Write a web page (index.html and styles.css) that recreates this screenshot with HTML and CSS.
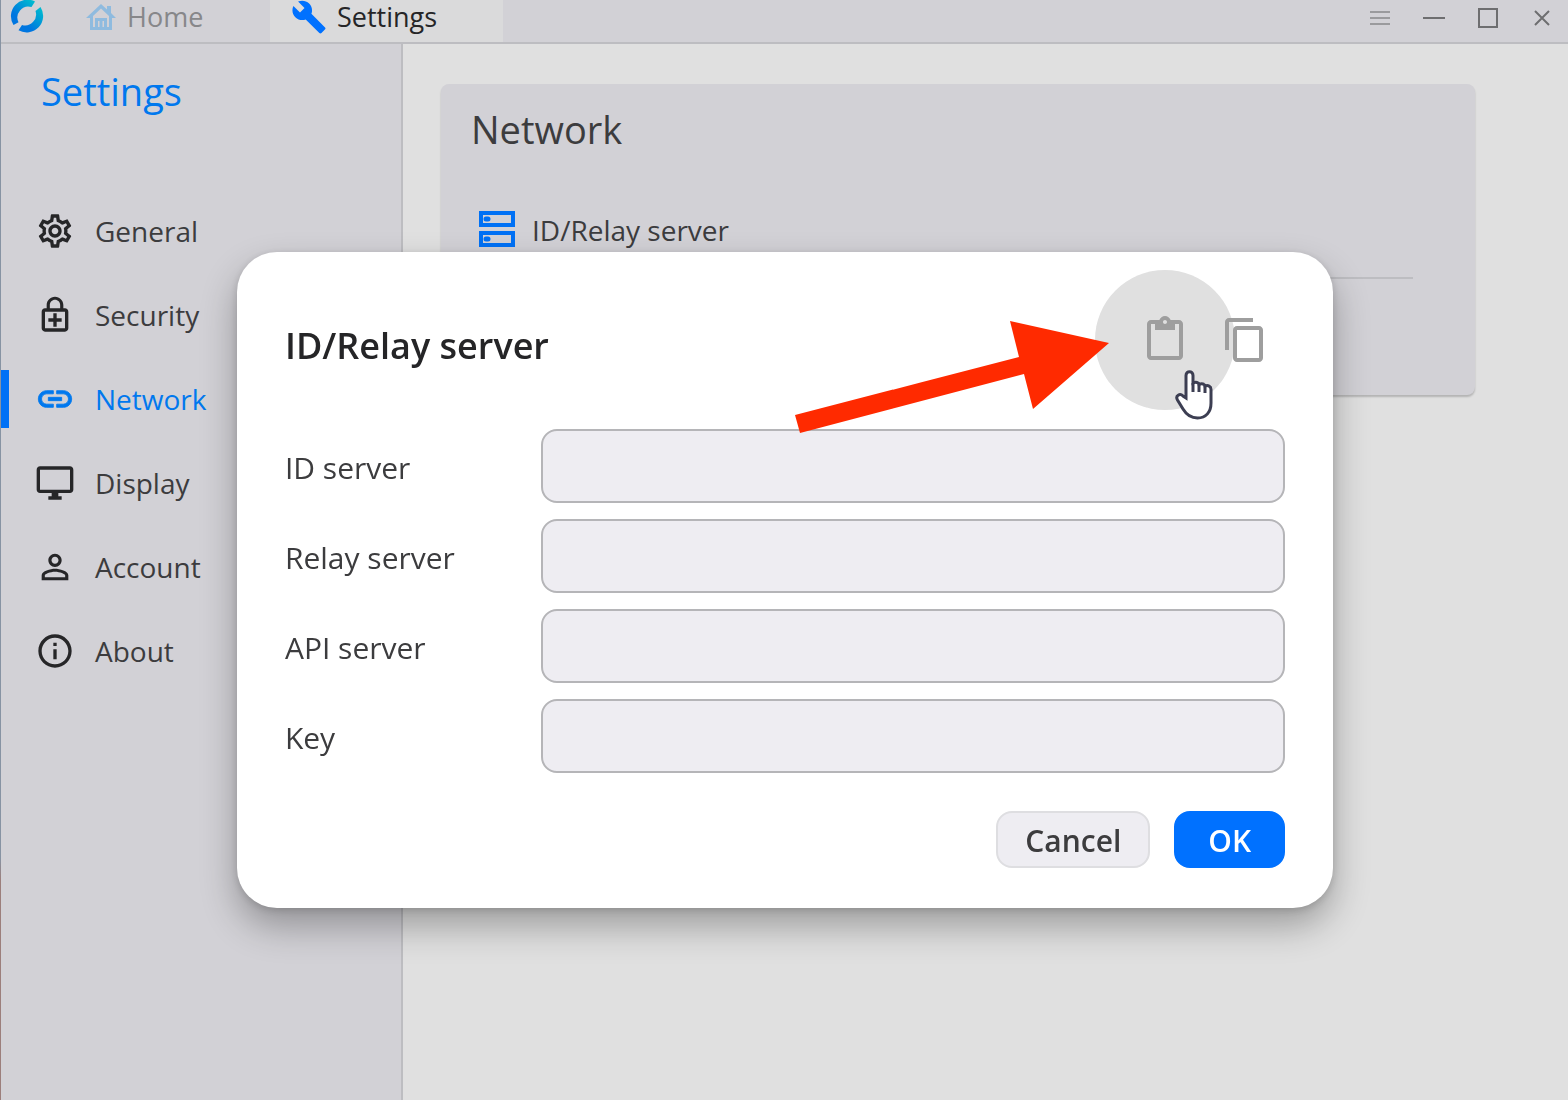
FILE: index.html
```html
<!DOCTYPE html>
<html lang="en">
<head>
    <meta charset="utf-8">
    <meta name="viewport" content="width=device-width, initial-scale=1.0">
    <title>Settings</title>
    <link rel="stylesheet" href="styles.css">
</head>
<body>
    <div class="window">
        <header class="titlebar">
            <svg class="logo" viewBox="0 0 34 34" aria-hidden="true">
                <defs>
                    <linearGradient id="logoFill" x1="0.2" y1="0.9" x2="0.9" y2="0.1">
                        <stop offset="0.2" stop-color="#0076e0" />
                        <stop offset="1" stop-color="#00b8d0" />
                    </linearGradient>
                </defs>
                <path fill="url(#logoFill)" d="M25 2.5A16.5 16.5 0 0 0 3.5 26L8.5 23.300A11 11 0 0 1 21.500 8Z" />
                <path fill="url(#logoFill)" d="M30.500 8A16.500 16.500 0 0 1 8.500 31.300L12 26A11 11 0 0 0 25.500 12Z" />
            </svg>
            <nav class="tabs">
                <a href="#home" class="tab">
                    <svg class="tab-icon home" viewBox="0 0 32 32" aria-hidden="true">
                        <path d="M16 3 1 17H5V29H27V17H31L26 12V5H22V8.500ZM16 7.500 24 15V26H22V17H10V26H8V15ZM13 20H14.500V26H13ZM17.500 20H19V26H17.500Z" fill-rule="evenodd" />
                    </svg>
                    <span>Home</span>
                </a>
                <a href="#settings" class="tab active">
                    <svg class="tab-icon" viewBox="0 0 24 24" aria-hidden="true">
                        <path d="M22.700 19l-9.100-9.100c.9-2.300.4-5-1.500-6.900-2-2-5-2.400-7.400-1.300L9 6 6 9 1.600 4.700C.4 7.100.9 10.100 2.900 12.100c1.900 1.900 4.600 2.400 6.900 1.500l9.100 9.100c.4.4 1 .4 1.400 0l2.300-2.300c.5-.4.5-1.100.1-1.400z" />
                    </svg>
                    <span>Settings</span>
                </a>
            </nav>
            <div class="window-controls">
                <button type="button" class="faint" aria-label="Menu">
                    <svg viewBox="0 0 22 22"><path d="M1 5H21M1 11H21M1 17H21" /></svg>
                </button>
                <button type="button" aria-label="Minimize">
                    <svg viewBox="0 0 22 22"><path d="M0 11H22" /></svg>
                </button>
                <button type="button" aria-label="Maximize">
                    <svg viewBox="0 0 22 22"><path d="M2 2H20V20H2Z" /></svg>
                </button>
                <button type="button" aria-label="Close">
                    <svg viewBox="0 0 22 22"><path d="M4 4 18 18M18 4 4 18" /></svg>
                </button>
            </div>
        </header>

        <div class="body">
            <aside class="sidebar">
                <h1>Settings</h1>
                <nav class="menu">
                    <a href="#general" class="menu-item">
                        <svg viewBox="0 0 24 24" aria-hidden="true"><path d="M19.430 12.980c.04-.32.07-.64.07-.98 0-.34-.03-.66-.07-.98l2.110-1.650c.19-.15.24-.42.12-.64l-2-3.460c-.09-.16-.26-.25-.44-.25-.06 0-.12.01-.17.03l-2.490 1c-.52-.4-1.080-.73-1.690-.98l-.38-2.650C14.460 2.180 14.250 2 14 2h-4c-.25 0-.46.18-.49.42l-.38 2.650c-.61.25-1.170.59-1.690.98l-2.490-1c-.06-.02-.12-.03-.18-.03-.17 0-.34.09-.43.25l-2 3.460c-.13.22-.07.49.12.64l2.110 1.650c-.04.32-.07.65-.07.98 0 .33.03.66.07.98l-2.110 1.650c-.19.15-.24.42-.12.64l2 3.460c.09.16.26.25.44.25.06 0 .12-.01.17-.03l2.490-1c.52.4 1.080.73 1.690.98l.38 2.650c.03.24.24.42.49.42h4c.25 0 .46-.18.49-.42l.38-2.650c.61-.25 1.170-.59 1.690-.98l2.490 1c.06.02.12.03.18.03.17 0 .34-.09.43-.25l2-3.460c.12-.22.07-.49-.12-.64l-2.110-1.650zm-1.980-1.710c.04.31.05.52.05.73 0 .21-.02.43-.05.73l-.14 1.130.89.7 1.080.84-.7 1.210-1.270-.51-1.040-.42-.9.68c-.43.32-.84.56-1.250.73l-1.060.43-.16 1.130-.2 1.350h-1.400l-.19-1.350-.16-1.130-1.060-.43c-.43-.18-.83-.41-1.230-.71l-.91-.7-1.060.43-1.270.51-.7-1.210 1.080-.84.89-.7-.14-1.130c-.03-.31-.05-.54-.05-.74s.02-.43.05-.73l.14-1.130-.89-.7-1.080-.84.7-1.210 1.270.51 1.040.42.9-.68c.43-.32.84-.56 1.250-.73l1.060-.43.16-1.130.2-1.350h1.390l.19 1.350.16 1.130 1.060.43c.43.18.83.41 1.230.71l.91.7 1.060-.43 1.270-.51.7 1.210-1.070.85-.89.7.14 1.130zM12 8c-2.210 0-4 1.790-4 4s1.790 4 4 4 4-1.790 4-4-1.790-4-4-4zm0 6c-1.100 0-2-.9-2-2s.9-2 2-2 2 .9 2 2-.9 2-2 2z" /></svg>
                        <span>General</span>
                    </a>
                    <a href="#security" class="menu-item">
                        <svg viewBox="0 0 24 24" aria-hidden="true"><path d="M18 8h-1V6c0-2.760-2.240-5-5-5S7 3.240 7 6v2H6c-1.100 0-2 .9-2 2v10c0 1.100.9 2 2 2h12c1.100 0 2-.9 2-2V10c0-1.100-.9-2-2-2zM8.900 6c0-1.710 1.390-3.100 3.100-3.100s3.100 1.390 3.100 3.100v2H8.900V6zM18 20H6V10h12v10zM11 19h2v-3h3v-2h-3v-3h-2v3H8v2h3z" /></svg>
                        <span>Security</span>
                    </a>
                    <a href="#network" class="menu-item active">
                        <svg viewBox="0 0 24 24" aria-hidden="true"><path d="M3.900 12c0-1.710 1.390-3.100 3.100-3.100h4V7H7c-2.760 0-5 2.240-5 5s2.240 5 5 5h4v-1.900H7c-1.710 0-3.100-1.390-3.100-3.100zM8 13h8v-2H8v2zm9-6h-4v1.900h4c1.710 0 3.100 1.390 3.100 3.100s-1.390 3.100-3.100 3.100h-4V17h4c2.760 0 5-2.240 5-5s-2.240-5-5-5z" /></svg>
                        <span>Network</span>
                    </a>
                    <a href="#display" class="menu-item">
                        <svg viewBox="0 0 24 24" aria-hidden="true"><path d="M21 2H3c-1.100 0-2 .9-2 2v12c0 1.100.9 2 2 2h7v2H8v2h8v-2h-2v-2h7c1.100 0 2-.9 2-2V4c0-1.100-.9-2-2-2zm0 14H3V4h18v12z" /></svg>
                        <span>Display</span>
                    </a>
                    <a href="#account" class="menu-item">
                        <svg viewBox="0 0 24 24" aria-hidden="true"><path d="M12 5.900c1.160 0 2.100.94 2.100 2.100s-.94 2.100-2.100 2.100S9.900 9.160 9.900 8s.94-2.100 2.100-2.100m0 9c2.970 0 6.100 1.460 6.100 2.100v1.100H5.900V17c0-.64 3.130-2.100 6.100-2.100M12 4C9.790 4 8 5.790 8 8s1.790 4 4 4 4-1.790 4-4-1.790-4-4-4zm0 9c-2.670 0-8 1.340-8 4v3h16v-3c0-2.660-5.330-4-8-4z" /></svg>
                        <span>Account</span>
                    </a>
                    <a href="#about" class="menu-item">
                        <svg viewBox="0 0 24 24" aria-hidden="true"><path d="M11 7h2v2h-2zm0 4h2v6h-2zm1-9C6.480 2 2 6.480 2 12s4.480 10 10 10 10-4.480 10-10S17.520 2 12 2zm0 18c-4.410 0-8-3.590-8-8s3.590-8 8-8 8 3.590 8 8-3.590 8-8 8z" /></svg>
                        <span>About</span>
                    </a>
                </nav>
            </aside>

            <main class="content">
                <section class="card">
                    <h2>Network</h2>
                    <button type="button" class="card-row">
                        <svg viewBox="0 0 38 38" aria-hidden="true">
                            <path d="M3 3H35V15H3ZM3 23H35V35H3Z" />
                            <path class="dot" d="M8 9H10M8 29H10" />
                        </svg>
                        <span>ID/Relay server</span>
                    </button>
                </section>
            </main>
        </div>
    </div>

    <div class="overlay">
        <div class="dialog" role="dialog" aria-labelledby="dialogTitle">
            <div class="dialog-header">
                <h3 id="dialogTitle">ID/Relay server</h3>
                <div class="dialog-actions">
                    <button type="button" class="icon-btn hovered" aria-label="Paste">
                        <svg viewBox="0 0 24 24"><path d="M19 2h-4.180C14.400.84 13.300 0 12 0c-1.300 0-2.400.84-2.820 2H5c-1.100 0-2 .9-2 2v16c0 1.100.9 2 2 2h14c1.100 0 2-.9 2-2V4c0-1.100-.9-2-2-2zm-7 0c.55 0 1 .45 1 1s-.45 1-1 1-1-.45-1-1 .45-1 1-1zm7 18H5V4h2v3h10V4h2v16z" /></svg>
                    </button>
                    <button type="button" class="icon-btn" aria-label="Copy">
                        <svg viewBox="0 0 24 24"><path d="M16 1H4c-1.100 0-2 .9-2 2v14h2V3h12V1zm3 4H8c-1.100 0-2 .9-2 2v14c0 1.100.9 2 2 2h11c1.100 0 2-.9 2-2V7c0-1.100-.9-2-2-2zm0 16H8V7h11v14z" /></svg>
                    </button>
                </div>
                <svg class="pointer-arrow" viewBox="0 0 314 112" aria-hidden="true">
                    <path d="M0 94 224 36 215 0 314 22 238 88 229 53 5 112Z" />
                </svg>
                <svg class="hand-cursor" viewBox="0 0 38 50" aria-hidden="true">
                    <path d="M11 28V5.500C11 0.500 18 0.500 18 5.500V13C21 11.500 23.500 12.500 24 14.500C27 13 29.500 14 30 16C33 15 36 16 36 19.500V33C36 42 31 48 22.500 48C15 48 11 44 8 39L2.500 30C0 25.500 5 23 8 26Z" />
                    <path d="M18 13V22M24 14.500V22M30 16V23" />
                </svg>
            </div>

            <form class="fields">
                <label for="idServer">ID server</label>
                <input type="text" id="idServer">
                <label for="relayServer">Relay server</label>
                <input type="text" id="relayServer">
                <label for="apiServer">API server</label>
                <input type="text" id="apiServer">
                <label for="key">Key</label>
                <input type="text" id="key">
            </form>

            <div class="dialog-footer">
                <button type="button" class="btn">Cancel</button>
                <button type="button" class="btn primary">OK</button>
            </div>
        </div>
    </div>
</body>
</html>
```
FILE: styles.css
```css
* {
    box-sizing: border-box;
}
body {
    margin: 0;
    padding-left: 1px;
    min-height: 100vh;
    font-family: 'Open Sans', 'Noto Sans', sans-serif;
    font-size: 28px;
    line-height: 40px;
    color: #3c3c3e;
    background: linear-gradient(#8793a3 0, #8793a3 78%, #9c7f7c 80%, #9c7f7c 100%);
}
h1, h2, h3 {
    margin: 0;
    font-weight: 400;
}
a {
    color: inherit;
    text-decoration: none;
}
button {
    font: inherit;
    color: inherit;
    border: none;
    background: none;
    padding: 0;
    cursor: pointer;
}
svg {
    display: block;
    flex-shrink: 0;
}
.window {
    display: flex;
    flex-direction: column;
    min-height: 100vh;
    background: #e0e0e0;
}

/* title bar */
.titlebar {
    display: flex;
    height: 44px;
    background: #d2d1d6;
    border-bottom: 2px solid #bdbdc1;
}
.logo {
    width: 34px;
    height: 34px;
    margin: -1px 0 0 9px;
}
.tabs {
    display: flex;
    flex: 1;
}
.tab {
    display: flex;
    align-items: center;
    gap: 10px;
    padding: 0 16px 8px;
    font-size: 27px;
    line-height: 34px;
    color: #87878a;
}
.tab:first-child {
    width: 226px;
    padding-left: 41px;
}
.tab.active {
    width: 233px;
    padding-left: 21px;
    background: #dadadb;
    color: #252527;
}
.tab-icon {
    width: 36px;
    height: 36px;
    fill: #0071ff;
}
.tab-icon.home {
    width: 32px;
    height: 32px;
    fill: #8fbbdf;
}
.window-controls {
    display: flex;
    gap: 32px;
    padding: 7px 15px 0 0;
}
.window-controls button {
    width: 22px;
    height: 22px;
}
.window-controls svg {
    width: 22px;
    height: 22px;
    fill: none;
    stroke: #6e6e70;
    stroke-width: 2;
}
.window-controls .faint svg {
    stroke: #9a9a9d;
}

/* sidebar */
.body {
    display: flex;
    flex: 1;
}
.sidebar {
    width: 402px;
    flex-shrink: 0;
    background: #d2d1d6;
    border-right: 2px solid #bdbdc1;
}
.sidebar h1 {
    padding: 19px 40px 0;
    font-size: 38px;
    line-height: 56px;
    color: #0078ee;
}
.menu {
    margin-top: 70px;
}
.menu-item {
    display: flex;
    align-items: center;
    gap: 20px;
    height: 84px;
    padding-left: 34px;
}
.menu-item svg {
    width: 40px;
    height: 40px;
    fill: #262628;
}
.menu-item.active {
    color: #0078ee;
    background: linear-gradient(#0071f5, #0071f5) left center / 8px 58px no-repeat;
}
.menu-item.active svg {
    fill: #0078ee;
    stroke: #0078ee;
    stroke-width: 0.5;
}

/* content */
.content {
    flex: 1;
    padding: 40px 93px 40px 38px;
}
.card {
    padding: 19px 62px 116px 30px;
    background: #d2d1d6;
    border-radius: 8px;
    box-shadow: 0 2px 2px rgba(0, 0, 0, 0.2);
}
.card h2 {
    font-size: 38px;
    line-height: 52px;
}
.card-row {
    display: flex;
    gap: 16px;
    width: 100%;
    margin-top: 55px;
    padding-left: 7px;
    text-align: left;
}
.card-row svg {
    width: 38px;
    height: 38px;
    fill: none;
    stroke: #0071f5;
    stroke-width: 4;
}
.card-row .dot {
    stroke-width: 5;
    stroke-linecap: round;
}
.card-row span {
    flex: 1;
    padding-bottom: 27px;
    border-bottom: 2px solid #bdbdc1;
}

/* dialog */
.overlay {
    position: fixed;
    inset: 0 0 0 2px;
    display: flex;
    justify-content: center;
    align-items: center;
    padding-top: 60px;
}
.dialog {
    width: 70%;
    min-width: 760px;
    padding: 48px 48px 40px;
    background: #fff;
    border-radius: 40px;
    box-shadow: 0 18px 36px rgba(0, 0, 0, 0.3), 0 2px 8px rgba(0, 0, 0, 0.15);
}
.dialog-header {
    position: relative;
    display: flex;
    align-items: center;
    justify-content: space-between;
    height: 80px;
    margin-bottom: 49px;
}
.dialog-header h3 {
    padding-top: 12px;
    font-size: 36px;
    line-height: 48px;
    font-weight: 600;
    color: #252527;
}
.dialog-actions {
    display: flex;
}
.icon-btn {
    position: relative;
    display: flex;
    align-items: center;
    justify-content: center;
    width: 80px;
    height: 80px;
}
.icon-btn.hovered::before {
    content: '';
    position: absolute;
    width: 140px;
    height: 140px;
    border-radius: 50%;
    background: #e0e0e0;
}
.icon-btn svg {
    position: relative;
    width: 48px;
    height: 48px;
    fill: #9e9e9e;
}
.pointer-arrow {
    position: absolute;
    top: 21px;
    right: 176px;
    width: 314px;
    height: 112px;
    fill: #ff2a00;
}
.hand-cursor {
    position: absolute;
    top: 70px;
    right: 72px;
    width: 38px;
    height: 50px;
    fill: #fff;
    stroke: #3c3e52;
    stroke-width: 3;
}
.fields {
    display: grid;
    grid-template-columns: 240px 1fr;
    gap: 16px;
    align-items: center;
    font-size: 30px;
}
.fields label {
    padding-top: 4px;
}
.fields input {
    width: 100%;
    height: 74px;
    padding: 0 20px;
    font: inherit;
    color: inherit;
    background: #eeedf2;
    border: 2px solid #b5b5b8;
    border-radius: 16px;
}
.dialog-footer {
    display: flex;
    justify-content: flex-end;
    gap: 24px;
    margin-top: 38px;
}
.btn {
    height: 57px;
    padding: 2px 27px 0;
    font-size: 30px;
    font-weight: 600;
    color: #3c3c3e;
    background: #eeedf2;
    border: 2px solid #dedee1;
    border-radius: 16px;
}
.btn.primary {
    padding: 2px 32px 0;
    color: #fff;
    background: #0071ff;
    border-color: #0071ff;
}
```
